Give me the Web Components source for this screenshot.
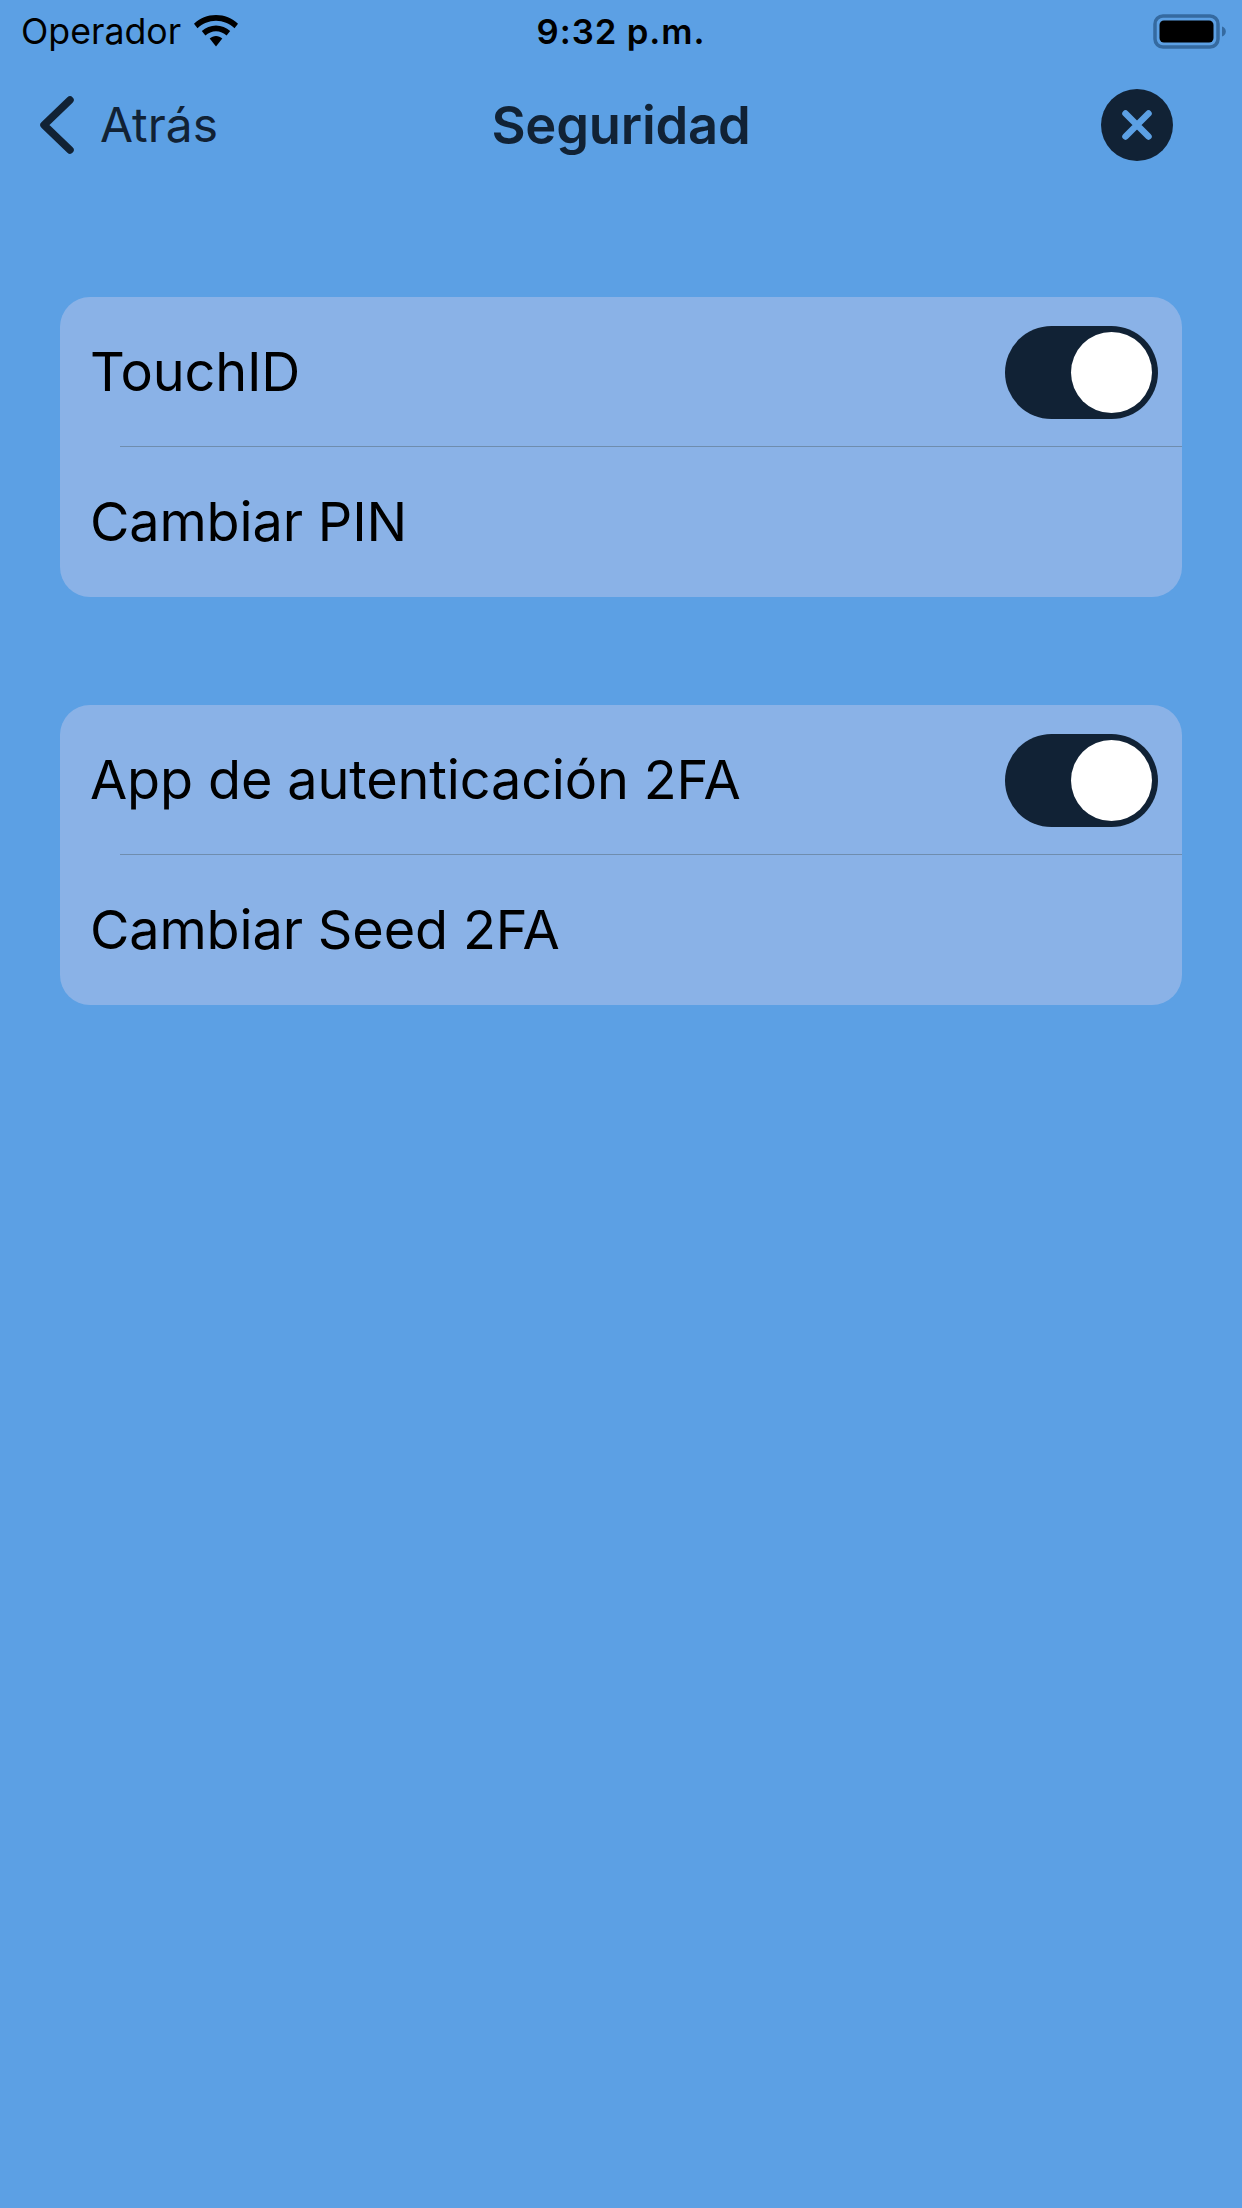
<!DOCTYPE html>
<html lang="es"><head><meta charset="utf-8"><title>Seguridad</title>
<style>
html,body{margin:0;padding:0;background:#5ca0e4}
body{width:1242px;height:2208px;overflow:hidden;font-family:Inter,"Liberation Sans",sans-serif}
</style></head><body>
<security-screen></security-screen>
<template id="t-status"><style>
:host{display:grid;grid-template-columns:1fr auto 1fr;align-items:center;height:64px;padding:0 21px;color:#000;font-family:Inter,sans-serif}
.l{display:flex;align-items:center;gap:12px;font-size:35.700px}
.l span,.t{margin-top:-2px}
.l svg{margin-top:-3px}
.t{font-size:34.700px;font-weight:600;letter-spacing:.9px}
.r{justify-self:end;display:flex;margin-right:-5px}
svg{display:block}
</style>
<div class="l"><span>Operador</span><svg width="46" height="34" viewBox="0 0 46 34"><path d="M23 1C14.500 1 6.900 4.300 1 9.700L4.500 14.300C9.500 9.600 16 6.800 23 6.800S36.500 9.600 41.500 14.300L45 9.700C39.100 4.300 31.500 1 23 1Z"/><path d="M23 11.500C17.600 11.500 12.700 13.600 8.800 17.100L12.400 21.600C15.300 18.900 19 17.300 23 17.300S30.700 18.900 33.600 21.600L37.200 17.100C33.300 13.600 28.400 11.500 23 11.500Z"/><path d="M23 22C20.700 22 18.500 22.900 16.700 24.400L23 32.500 29.300 24.400C27.500 22.900 25.300 22 23 22Z"/></svg></div>
<div class="t">9:32 p.m.</div>
<div class="r"><svg width="73" height="36" viewBox="0 0 73 36"><rect x="2" y="2" width="63" height="31" rx="8" fill="none" stroke="#356aa0" stroke-width="3.500"/><rect x="6.500" y="6.500" width="54" height="22" rx="4.500" fill="#000"/><path d="M69 12.500C71.500 13.300 72.800 15.200 72.800 17.500S71.500 21.700 69 22.500Z" fill="#356aa0"/></svg></div>
</template>
<template id="t-nav"><style>
:host{display:grid;grid-template-columns:1fr auto 1fr;align-items:center;height:72px;margin-top:25px;padding:0 40px;color:#112235;font-family:Inter,sans-serif}
.b{display:flex;align-items:center;gap:26px;font-size:47.900px;color:#112235}
.h{font-size:52.500px;font-weight:600;letter-spacing:-.2px;color:#112235}
.x{justify-self:end;width:72px;height:72px;margin-right:29px}
svg{display:block}
</style>
<div class="b"><svg width="34" height="58" viewBox="0 0 34 58"><path d="M30 4L4 29L30 54" fill="none" stroke="#112235" stroke-width="7.500" stroke-linecap="round" stroke-linejoin="round"/></svg><span>Atrás</span></div>
<div class="h"><slot></slot></div>
<svg class="x" viewBox="0 0 72 72"><circle cx="36" cy="36" r="36" fill="#112235"/><path d="M24.500 24.500L47.500 47.500M47.500 24.500L24.500 47.500" stroke="#5ca0e4" stroke-width="6.500" stroke-linecap="round"/></svg>
</template>
<template id="t-card"><style>
:host{display:block;margin:0 60px;border-radius:30px;background:#8ab2e7;overflow:hidden}
</style><slot></slot></template>
<template id="t-row"><style>
:host{display:flex;align-items:center;justify-content:space-between;height:150px;box-sizing:border-box;padding:0 24px 0 30px;position:relative;font-family:Inter,sans-serif;font-size:54px;color:#000;letter-spacing:-.15px}
.txt{margin-top:-2px}
:host([sep])::after{content:"";position:absolute;left:60px;right:0;bottom:0;height:1px;background:#6f8dae}
</style><span class="txt"><slot></slot></span><slot name="end"></slot></template>
<template id="t-toggle"><style>
:host{display:block;width:153px;height:93px;border-radius:47px;background:#112235;position:relative}
i{position:absolute;right:6px;top:6px;width:81px;height:81px;border-radius:50%;background:#fff}
</style><i></i></template>
<template id="t-screen"><style>
:host{display:block;width:1242px;height:2208px;background:#5ca0e4}
.list{display:flex;flex-direction:column;gap:108px;margin-top:136px}
</style>
<status-bar></status-bar>
<nav-bar>Seguridad</nav-bar>
<div class="list">
<group-card><list-row sep>TouchID<on-toggle slot="end"></on-toggle></list-row><list-row>Cambiar PIN</list-row></group-card>
<group-card><list-row sep>App de autenticación 2FA<on-toggle slot="end"></on-toggle></list-row><list-row>Cambiar Seed 2FA</list-row></group-card>
</div>
</template>
<script>
const def=(n,t)=>customElements.define(n,class extends HTMLElement{constructor(){super();this.attachShadow({mode:"open"}).appendChild(document.getElementById(t).content.cloneNode(true))}});
def("status-bar","t-status");def("nav-bar","t-nav");def("group-card","t-card");def("list-row","t-row");def("on-toggle","t-toggle");def("security-screen","t-screen");
</script>
</body></html>
